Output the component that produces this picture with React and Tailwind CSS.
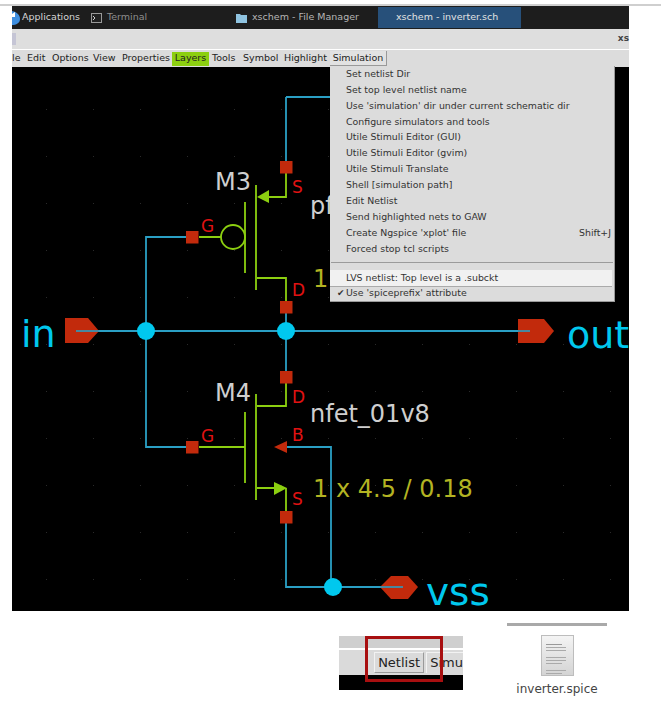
import React from 'react';

const WIRE = '#2a9fc4';
const GREEN = '#8ccf10';
const PIN = '#c22a0c';
const CYAN = '#00c8ee';
const GOLD = '#b3b322';

const menuItems = [
  'Set netlist Dir',
  'Set top level netlist name',
  "Use 'simulation' dir under current schematic dir",
  'Configure simulators and tools',
  'Utile Stimuli Editor (GUI)',
  'Utile Stimuli Editor (gvim)',
  'Utile Stimuli Translate',
  'Shell [simulation path]',
  'Edit Netlist',
  'Send highlighted nets to GAW',
];

const menuBar = [
  ['le', 'w-[15px]'],
  ['Edit', 'w-[25px]'],
  ['Options', 'w-[41px]'],
  ['View', 'w-[29px]'],
  ['Properties', 'w-[50px]'],
];

function Pad({ x, y }) {
  return <rect x={x - 6} y={y - 6} width="12.5" height="12.5" fill={PIN} />;
}

function Schematic() {
  const dots = [];
  for (let x = 46; x < 629; x += 47) {
    for (let y = 109; y < 611; y += 47) {
      dots.push(<rect key={x + '-' + y} x={x} y={y} width="1" height="1" fill="#2a2a2a" />);
    }
  }
  return (
    <svg viewBox="12 67 617 544" className="block h-[544px] w-[617px] overflow-visible font-['DejaVu_Sans',sans-serif]">
      {dots}
      {/* nets */}
      <path
        d="M286 97H335M286 97V161M192 237H146V447H192M76 331H520M286 313V371M286 523V587H403M286 447H331V587"
        fill="none"
        stroke={WIRE}
        strokeWidth="1.8"
      />
      {/* pfet */}
      <g fill="none" stroke={GREEN} strokeWidth="1.8">
        <path d="M286 173V197H269M256 185V290M245 202V273M199 237H221M257 278H286V301" />
        <circle cx="233" cy="237" r="12" />
      </g>
      <path d="M257 197L269 190V203Z" fill={GREEN} />
      {/* nfet */}
      <g fill="none" stroke={GREEN} strokeWidth="1.8">
        <path d="M286 383V406H257M256 394V500M245 412V483M199 447H245M257 488H275M286 488V511" />
      </g>
      <path d="M287 488L274 482V495Z" fill={GREEN} />
      <path d="M274 447L287 441V453Z" fill={PIN} />
      {/* pins */}
      <path d="M65 318H88L99 331L88 343H65Z" fill={PIN} />
      <path d="M518 319H544L554 331L544 343H518Z" fill={PIN} />
      <path d="M380 587L391 576H408L418 587L408 599H391Z" fill={PIN} />
      <path d="M76 331H99M518 331H530M380 587H403" stroke={WIRE} strokeWidth="1.8" opacity="0.8" />
      <Pad x={286} y={167} />
      <Pad x={192} y={237} />
      <Pad x={286} y={307} />
      <Pad x={286} y={377} />
      <Pad x={192} y={447} />
      <Pad x={286} y={517} />
      <circle cx="146" cy="331" r="9" fill={CYAN} />
      <circle cx="286" cy="331" r="9" fill={CYAN} />
      <circle cx="333" cy="587" r="9" fill={CYAN} />
      {/* labels */}
      <g fill="#cfcfcf" fontSize="24">
        <text x="215" y="190">M3</text>
        <text x="215" y="401">M4</text>
        <text x="310" y="214">pf</text>
        <text x="310" y="422">nfet_01v8</text>
      </g>
      <g fill={GOLD} fontSize="24">
        <text x="313" y="287">1</text>
        <text x="313" y="497">1 x 4.5 / 0.18</text>
      </g>
      <g fill="#e01212" fontSize="17">
        <text x="201" y="232">G</text>
        <text x="292" y="193">S</text>
        <text x="292" y="296">D</text>
        <text x="292" y="403">D</text>
        <text x="201" y="442">G</text>
        <text x="292" y="441">B</text>
        <text x="292" y="505">S</text>
      </g>
      <g fill={CYAN} fontSize="38">
        <text x="21" y="347">in</text>
        <text x="567" y="348">out</text>
        <text x="426" y="605" fontSize="39">vss</text>
      </g>
    </svg>
  );
}

function SimulationMenu() {
  const row = 'flex h-[15.9px] items-center pl-4 whitespace-nowrap';
  return (
    <div className="absolute left-[318px] top-[-1px] z-10 w-[285px] border-r border-b border-[#9a9a9a] bg-[#dcdcdc] text-[9.4px] text-[#333]">
      {menuItems.map((item) => (
        <div key={item} className={row}>{item}</div>
      ))}
      <div className={row + ' justify-between pr-[3px]'}>
        <span>Create Ngspice 'xplot' file</span>
        <span>Shift+J</span>
      </div>
      <div className={row}>Forced stop tcl scripts</div>
      <div className="mx-px mt-[5px] mb-[7px] border-t border-[#9b9b9b]" />
      <div className={row + ' mr-[2px] bg-[#f1f1f1] shadow-[0_1px_0_#aaa]'}>LVS netlist: Top level is a .subckt</div>
      <div className={row + ' relative'}>
        <span className="absolute left-[7px] text-[9px]">✔</span>
        Use 'spiceprefix' attribute
      </div>
    </div>
  );
}

function Taskbar() {
  return (
    <div className="flex h-[23px] items-center bg-[#1d1d1d] text-[9.5px] text-[#b5b5b5]">
      <svg width="8" height="16" viewBox="0 0 8 16" className="shrink-0">
        <path d="M0 1C5 2 8 5 8 9C8 13 4 15 0 15Z" fill="#3f8fe0" />
        <path d="M0 4L3 2V7H0Z" fill="#fff" />
      </svg>
      <span className="ml-[2px] w-[69px] text-[#d6d6d6]">Applications</span>
      <svg width="11" height="10" viewBox="0 0 11 10" className="shrink-0">
        <rect x="0.5" y="0.5" width="10" height="9" fill="#222" stroke="#999" />
        <path d="M2 3L4 5L2 7" fill="none" stroke="#ccc" />
      </svg>
      <span className="ml-[5px] w-[129px] text-[#8e8e8e]">Terminal</span>
      <svg width="11" height="10" viewBox="0 0 11 10" className="shrink-0">
        <path d="M0 1H4L5 2H11V10H0Z" fill="#8fc3e0" />
      </svg>
      <span className="ml-[5px] w-[126px]">xschem - File Manager</span>
      <div className="flex h-[21px] w-[143px] items-center bg-[#27507a] pl-[18px] text-[#e2e2e2]">xschem - inverter.sch</div>
    </div>
  );
}

function App() {
  return (
    <div className="h-[715px] w-[661px] overflow-hidden bg-white font-['DejaVu_Sans',sans-serif]">
      <div className="mt-1 h-[2px] bg-[#cfcfcf]" />
      <div className="ml-3 w-[617px]">
        <Taskbar />
        <div className="flex h-[21px] items-center justify-between border-b border-white bg-[#dedede] text-[9px] font-bold text-[#444]">
          <span className="h-3 w-1 bg-[#c5c5d5]" />
          <span>xs</span>
        </div>
        <div className="flex h-[17px] items-center bg-[#dcdcdc] text-[9.5px] text-[#222]">
          {menuBar.map(([label, width]) => (
            <span key={label} className={width + ' whitespace-nowrap'}>{label}</span>
          ))}
          <span className="flex h-[14px] w-[37px] items-center justify-center bg-[#8ccf10]">Layers</span>
          <span className="ml-[3px] w-[31px]">Tools</span>
          <span className="w-[41px]">Symbol</span>
          <span className="w-[46px]">Highlight</span>
          <span className="flex h-[15px] w-[57px] items-center justify-center border-r border-b border-[#999] bg-[#e2e2e2]">Simulation</span>
        </div>
        <div className="relative h-[544px] bg-black">
          <Schematic />
          <SimulationMenu />
        </div>
      </div>
      <div className="flex items-start">
        <div className="relative ml-[339px] mt-[25px] h-[54px] w-[124px] overflow-hidden bg-black">
          <div className="h-3 bg-[#cfcfcf]" />
          <div className="flex h-[27px] items-center border-t-2 border-white bg-[#dadada] pl-[35px] text-[13px] text-[#222]">
            <span className="flex h-[21px] w-[51px] items-center justify-center border border-[#f2f2f2] border-r-[#9a9a9a] border-b-[#9a9a9a]">Netlist</span>
            <span className="ml-[2px] flex h-[21px] items-center whitespace-nowrap border-l border-t border-[#f2f2f2] pl-[3px]">Simu</span>
          </div>
          <div className="absolute left-[26px] top-0 h-[46px] w-[78px] border-[3px] border-[#a80f10]" />
        </div>
        <div className="ml-11 mt-[12px] flex w-[100px] flex-col items-center">
          <div className="h-[3px] w-full bg-[#a9a9a9]" />
          <div className="mt-[9px] flex h-[41px] w-[33px] flex-col gap-[2px] border border-[#bdbdbd] bg-gradient-to-b from-[#f4f4f4] to-[#d4d4d4] px-1 pt-2">
            <div className="h-px w-4 bg-[#999]" />
            <div className="h-px w-5 bg-[#aaa]" />
            <div className="h-px w-5 bg-[#aaa]" />
            <div className="mt-1 h-px w-5 bg-[#aaa]" />
            <div className="h-px w-5 bg-[#aaa]" />
            <div className="h-px w-4 bg-[#aaa]" />
            <div className="mt-1 h-px w-5 bg-[#aaa]" />
            <div className="h-px w-4 bg-[#aaa]" />
          </div>
          <span className="mt-[5px] text-[12px] leading-4 text-[#444]">inverter.spice</span>
        </div>
      </div>
    </div>
  );
}

export default App;
